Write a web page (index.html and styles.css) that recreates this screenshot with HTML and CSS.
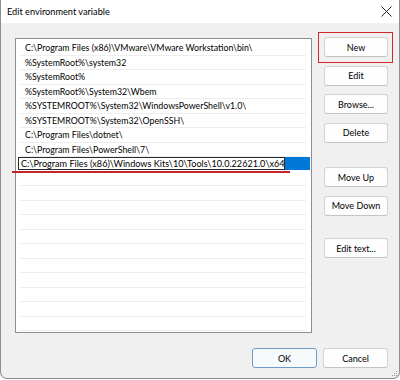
FILE: index.html
```html
<!DOCTYPE html>
<html>
<head>
<meta charset="utf-8">
<link rel="stylesheet" href="styles.css">
</head>
<body>
<div class="window">
  <div class="titlebar">
    <span class="title">Edit environment variable</span>
    <svg class="close" width="11" height="11" viewBox="0 0 11 11"><path d="M0.5 0.5 L10.5 10.5 M10.5 0.5 L0.5 10.5" stroke="#222" stroke-width="1" fill="none"/></svg>
  </div>
  <div class="content">
    <div class="main">
      <div class="list">
        <div class="row">C:\Program Files (x86)\VMware\VMware Workstation\bin\</div>
        <div class="row">%SystemRoot%\system32</div>
        <div class="row">%SystemRoot%</div>
        <div class="row">%SystemRoot%\System32\Wbem</div>
        <div class="row">%SYSTEMROOT%\System32\WindowsPowerShell\v1.0\</div>
        <div class="row">%SYSTEMROOT%\System32\OpenSSH\</div>
        <div class="row">C:\Program Files\dotnet\</div>
        <div class="row">C:\Program Files\PowerShell\7\</div>
        <div class="row editing"><span class="editbox"><span class="caret">C:\Program Files (x86)\Windows Kits\10\Tools\10.0.22621.0\x64</span></span><span class="sel"></span></div>
        <div class="row"></div>
        <div class="row"></div>
        <div class="row"></div>
        <div class="row"></div>
        <div class="row"></div>
        <div class="row"></div>
        <div class="row"></div>
        <div class="row"></div>
        <div class="row"></div>
        <div class="row"></div>
        <div class="row"></div>
      </div>
      <div class="side">
        <div class="hl"><button class="btn">New</button></div>
        <button class="btn">Edit</button>
        <button class="btn">Browse...</button>
        <button class="btn">Delete</button>
        <button class="btn group">Move Up</button>
        <button class="btn">Move Down</button>
        <button class="btn group2">Edit text...</button>
      </div>
    </div>
    <div class="footer">
      <button class="btn primary">OK</button>
      <button class="btn">Cancel</button>
    </div>
  </div>
  <svg class="grip" width="7" height="7" viewBox="0 0 7 7"><g fill="#9a9a9a"><rect x="5" y="1" width="1" height="1"/><rect x="3" y="3" width="1" height="1"/><rect x="5" y="3" width="1" height="1"/><rect x="1" y="5" width="1" height="1"/><rect x="3" y="5" width="1" height="1"/><rect x="5" y="5" width="1" height="1"/></g></svg>
</div>
</body>
</html>
```

FILE: styles.css
```css
html, body {
  margin: 0;
  padding: 0;
  background: #ffffff;
}
body {
  font-family: "Lato", "Noto Sans", sans-serif;
  font-size: 8.8px;
  color: #000000;
}
.window {
  position: relative;
  width: 400px;
  height: 379px;
  box-sizing: border-box;
  border: 1px solid #8e8e8e;
  border-top: none;
  border-radius: 0 0 7px 7px;
  background: #f0f0f0;
  display: flex;
  flex-direction: column;
  overflow: hidden;
}
.titlebar {
  height: 23px;
  flex: none;
  background: #ffffff;
  display: flex;
  align-items: center;
  justify-content: space-between;
  padding: 0 7px 0 6px;
}
.title {
  font-size: 9.2px;
  color: #000000;
}
.close {
  display: block;
}
.content {
  flex: 1;
  display: flex;
  flex-direction: column;
  padding: 15px 11px 0 14px;
}
.main {
  display: flex;
  gap: 12px;
}
.list {
  width: 297px;
  height: 295px;
  box-sizing: border-box;
  border: 1px solid #8a8e96;
  background: #ffffff;
  padding-top: 2px;
}
.row {
  position: relative;
  height: 14.5px;
  box-sizing: border-box;
  line-height: 13.5px;
  padding-left: 5px;
  margin: 0 5px 0 4px;
  border-bottom: 1px solid #eeeeee;
  white-space: nowrap;
}
.row.editing {
  display: flex;
  padding-left: 0;
  margin: 0 1px 0 2px;
  border-bottom-color: transparent;
}
.editbox {
  width: 267px;
  height: 13px;
  box-sizing: border-box;
  border: 1px solid #2a2a2a;
  background: #ffffff;
  padding-left: 2px;
  line-height: 11px;
  font-size: 9.1px;
  overflow: hidden;
}
.caret {
  border-right: 1px solid #000;
}
.sel {
  flex: 1;
  height: 13px;
  background: #0078d7;
}
.row.editing::after {
  content: "";
  position: absolute;
  left: -6px;
  top: 14px;
  width: 278px;
  height: 1.5px;
  background: #c1272d;
}
.side {
  width: 64px;
  display: flex;
  flex-direction: column;
  gap: 8.5px;
  margin-top: -1px;
}
.btn {
  display: block;
  width: 64px;
  height: 20px;
  box-sizing: border-box;
  border: 1px solid #d3d3d3;
  border-bottom-color: #c4c4c4;
  border-radius: 3px;
  background: #fdfdfd;
  font-family: "Lato", "Noto Sans", sans-serif;
  font-size: 9px;
  color: #000000;
  padding: 0;
  line-height: 17px;
}
.btn.group {
  margin-top: 16px;
}
.btn.group2 {
  margin-top: 14px;
}
.hl {
  position: relative;
}
.hl::after {
  content: "";
  position: absolute;
  left: -6px;
  right: -5px;
  top: -5px;
  bottom: -6px;
  border: 1.5px solid #d0282e;
}
.footer {
  display: flex;
  justify-content: flex-end;
  gap: 6px;
  margin-top: 15px;
}
.footer .btn {
  width: 65px;
}
.btn.primary {
  border-color: #6f9cc6;
  background: #f7fafc;
}
.grip {
  position: absolute;
  right: 1px;
  bottom: 1px;
}
```
